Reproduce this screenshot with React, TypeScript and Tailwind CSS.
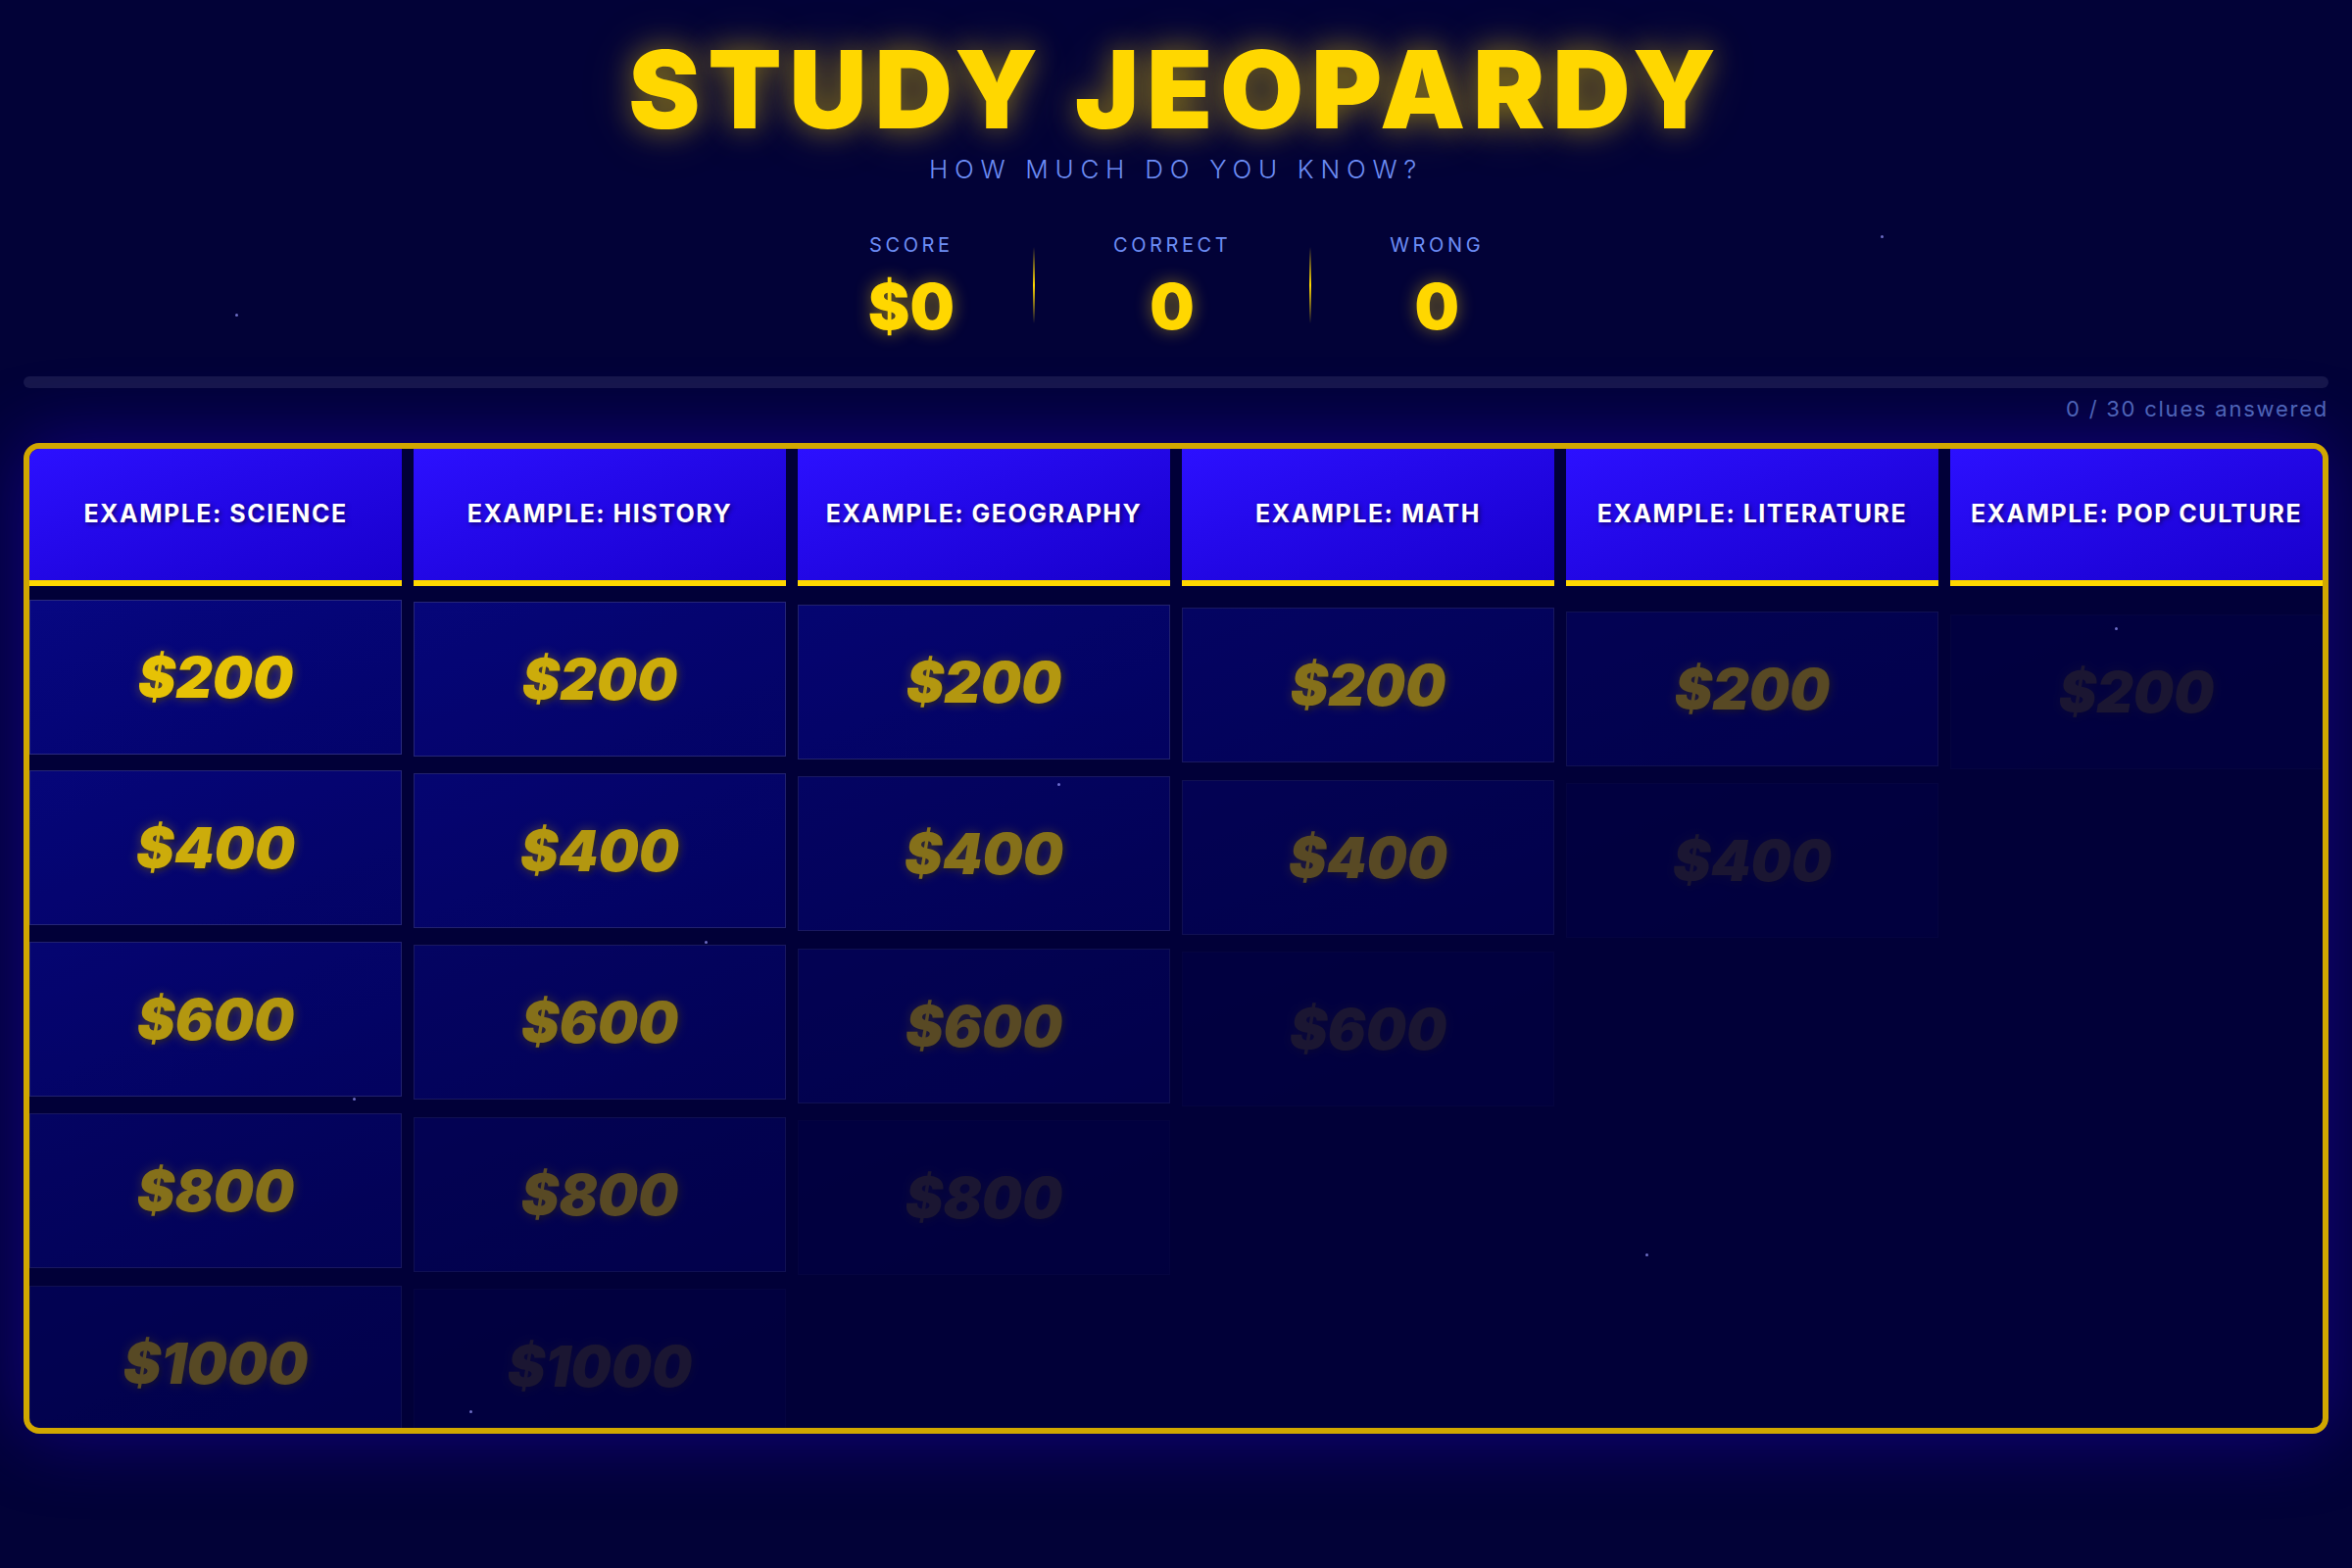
import React from 'react';

const categories = [
  'EXAMPLE: SCIENCE',
  'EXAMPLE: HISTORY',
  'EXAMPLE: GEOGRAPHY',
  'EXAMPLE: MATH',
  'EXAMPLE: LITERATURE',
  'EXAMPLE: POP CULTURE',
];

const values = [200, 400, 600, 800, 1000];

// cells fade in along the diagonal (column + row), caught mid-animation
const fade = [
  'opacity-[0.9] translate-y-0',
  'opacity-[0.8] translate-y-[2px]',
  'opacity-[0.7] translate-y-[5px]',
  'opacity-[0.52] translate-y-[8px]',
  'opacity-[0.34] translate-y-[12px]',
  'opacity-[0.1] translate-y-[15px]',
  'opacity-0 translate-y-[20px]',
];

const stars = [
  'left-[240px] top-[320px]',
  'left-[1919px] top-[240px]',
  'left-[2158px] top-[640px]',
  'left-[360px] top-[1120px]',
  'left-[719px] top-[960px]',
  'left-[1079px] top-[799px]',
  'left-[479px] top-[1439px]',
  'left-[1679px] top-[1279px]',
];

function Stat({ label, value }: { label: string; value: string }) {
  return (
    <div className="flex flex-col items-center">
      <span className="text-[20px] leading-[28px] tracking-[0.18em] text-[#6d8df5]">{label}</span>
      <span className="mt-[17px] text-[64px] font-black leading-none text-[#ffd700] [text-shadow:0_0_18px_rgba(255,215,0,0.45)]">
        {value}
      </span>
    </div>
  );
}

function Divider() {
  return <div className="h-[78px] w-[2px] self-center bg-gradient-to-b from-transparent via-[#ffd700] to-transparent" />;
}

export default function App() {
  return (
    <div className="relative min-h-screen overflow-hidden bg-[#020237] px-6 pt-[36px] font-['Inter',sans-serif]">
      <h1 className="text-center text-[110px] font-black leading-none tracking-[0.07em] text-[#ffd700] [text-shadow:0_0_30px_rgba(255,215,0,0.45),0_0_60px_rgba(255,215,0,0.2)]">
        STUDY JEOPARDY
      </h1>
      <p className="mt-[14px] text-center text-[26px] font-light leading-none tracking-[0.26em] text-[#6d8df5]">
        HOW MUCH DO YOU KNOW?
      </p>

      <div className="mt-[50px] flex justify-center gap-[80px]">
        <Stat label="SCORE" value="$0" />
        <Divider />
        <Stat label="CORRECT" value="0" />
        <Divider />
        <Stat label="WRONG" value="0" />
      </div>

      <div className="mt-[39px] h-[12px] w-full rounded-full bg-[#17174a]" />
      <p className="mt-[10px] text-right text-[22px] leading-none tracking-[0.08em] text-[#4e64b8]">
        0 / 30 clues answered
      </p>

      <div className="mt-[24px] h-[1011px] overflow-hidden rounded-[16px] border-[6px] border-[#d1a700] bg-[#010038] shadow-[0_0_80px_rgba(40,0,220,0.45)]">
        <div className="grid grid-cols-6 gap-x-3">
          {categories.map((c) => (
            <div
              key={c}
              className="flex h-[140px] items-center justify-center border-b-[6px] border-[#ffd700] bg-gradient-to-br from-[#2c10ff] to-[#1800cc] text-[25px] font-bold tracking-[0.06em] text-white [text-shadow:2px_2px_4px_rgba(0,0,0,0.5)]"
            >
              {c}
            </div>
          ))}
        </div>
        <div className="grid grid-cols-6 gap-x-3 gap-y-[14px] pt-[14px]">
          {values.map((v, r) =>
            categories.map((c, col) => (
              <div
                key={c + v}
                className={`flex h-[158px] items-center justify-center border border-[#2f2f86] bg-gradient-to-br from-[#08088a] to-[#040470] ${fade[Math.min(col + r, 6)]}`}
              >
                <span className="text-[58px] font-black italic leading-none text-[#ffd700] [text-shadow:0_0_12px_rgba(255,215,0,0.4),2px_2px_4px_rgba(0,0,0,0.5)]">
                  ${v}
                </span>
              </div>
            ))
          )}
        </div>
      </div>

      {stars.map((s) => (
        <span key={s} className={`absolute h-[3px] w-[3px] rounded-full bg-[#9a9aff] opacity-70 ${s}`} />
      ))}
    </div>
  );
}
